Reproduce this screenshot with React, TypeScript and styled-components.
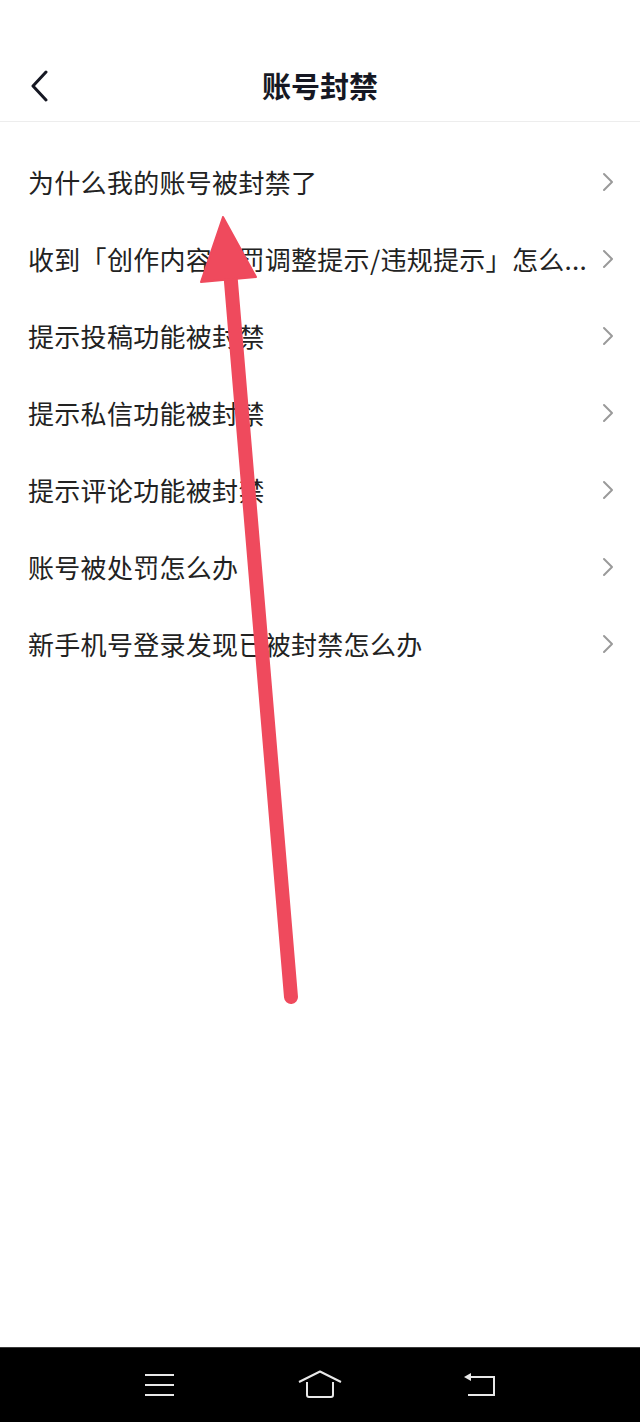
import React from "react";
import styled, { createGlobalStyle } from "styled-components";

const Global = createGlobalStyle`
  html, body { margin: 0; padding: 0; background: #fff; }
  body { font-family: "Noto Sans CJK SC", "Noto Sans", sans-serif; }
  * { box-sizing: border-box; }
`;

const Screen = styled.div`
  position: relative;
  width: 640px;
  height: 1422px;
  display: flex;
  flex-direction: column;
  background: #fff;
  overflow: hidden;
`;

const StatusSpace = styled.div`
  height: 48px;
  flex: none;
`;

const Header = styled.header`
  position: relative;
  height: 74px;
  flex: none;
  display: flex;
  align-items: center;
  justify-content: center;
  border-bottom: 1px solid #ededed;
`;

const BackButton = styled.button`
  position: absolute;
  left: 24px;
  top: 18px;
  width: 32px;
  height: 40px;
  padding: 0;
  border: none;
  background: transparent;
  display: flex;
  align-items: center;
  justify-content: center;
`;

const Title = styled.h1`
  margin: 0;
  font-size: 29px;
  font-weight: 700;
  color: #161823;
  letter-spacing: 0;
`;

const List = styled.ul`
  list-style: none;
  margin: 0;
  padding: 21px 0 0;
  flex: 1;
`;

const Row = styled.li`
  height: 77px;
  display: flex;
  align-items: center;
  padding: 0 28px 0 28px;
  gap: 10px;
`;

const RowText = styled.span`
  flex: 1;
  min-width: 0;
  font-size: 26px;
  line-height: 40px;
  letter-spacing: 0.3px;
  color: #222;
  white-space: nowrap;
`;

const Chevron = styled.svg`
  flex: none;
  width: 14px;
  height: 20px;
  margin-right: -3px;
`;

const NavBar = styled.nav`
  flex: none;
  height: 75px;
  background: #000;
  display: flex;
  align-items: center;
  justify-content: center;
  border-top: 1px solid #3a3a3a;
`;

const NavSlot = styled.div<{ $w: number }>`
  width: ${(p) => p.$w}px;
  display: flex;
  justify-content: center;
  align-items: center;
`;

const Overlay = styled.svg`
  position: absolute;
  left: 0;
  top: 0;
  width: 640px;
  height: 1422px;
  pointer-events: none;
`;

const items = [
  "为什么我的账号被封禁了",
  "收到「创作内容处罚调整提示/违规提示」怎么...",
  "提示投稿功能被封禁",
  "提示私信功能被封禁",
  "提示评论功能被封禁",
  "账号被处罚怎么办",
  "新手机号登录发现已被封禁怎么办",
];

export default function App() {
  return (
    <>
      <Global />
      <Screen>
        <StatusSpace />
        <Header>
          <BackButton aria-label="返回">
            <svg width="20" height="32" viewBox="0 0 20 32">
              <path d="M16 2 L3 16 L16 30" fill="none" stroke="#161823" strokeWidth="3" strokeLinecap="round" strokeLinejoin="round" />
            </svg>
          </BackButton>
          <Title>账号封禁</Title>
        </Header>
        <List>
          {items.map((t) => (
            <Row key={t}>
              <RowText>{t}</RowText>
              <Chevron viewBox="0 0 14 20">
                <path d="M3 2 L11 10 L3 18" fill="none" stroke="#9a9a9a" strokeWidth="2" strokeLinecap="round" strokeLinejoin="round" />
              </Chevron>
            </Row>
          ))}
        </List>
        <NavBar>
          <NavSlot $w={160}>
            <svg width="32" height="26" viewBox="0 0 32 26">
              <path d="M1 3 H30 M1 13 H30 M1 23 H30" stroke="#e8e8e8" strokeWidth="2" />
            </svg>
          </NavSlot>
          <NavSlot $w={160}>
            <svg width="44" height="30" viewBox="0 0 44 30">
              <path d="M1 12 L22 1.5 L43 12" fill="none" stroke="#e8e8e8" strokeWidth="2" strokeLinejoin="round" />
              <path d="M9 12 V25 Q9 27 11 27 H33 Q35 27 35 25 V12" fill="none" stroke="#e8e8e8" strokeWidth="2" />
            </svg>
          </NavSlot>
          <NavSlot $w={160}>
            <svg width="34" height="26" viewBox="0 0 34 26">
              <path d="M7 5 H31 V23 H5" fill="none" stroke="#e8e8e8" strokeWidth="2" />
              <path d="M1 5 L8 1 L8 9 Z" fill="#e8e8e8" />
            </svg>
          </NavSlot>
        </NavBar>
        <Overlay viewBox="0 0 640 1422">
          <line x1="230" y1="270" x2="291" y2="997" stroke="#ef4a5d" strokeWidth="14" strokeLinecap="round" />
          <polygon points="223,217 201,282 256,277" fill="#ef4a5d" strokeLinejoin="round" stroke="#ef4a5d" strokeWidth="2" />
        </Overlay>
      </Screen>
    </>
  );
}
